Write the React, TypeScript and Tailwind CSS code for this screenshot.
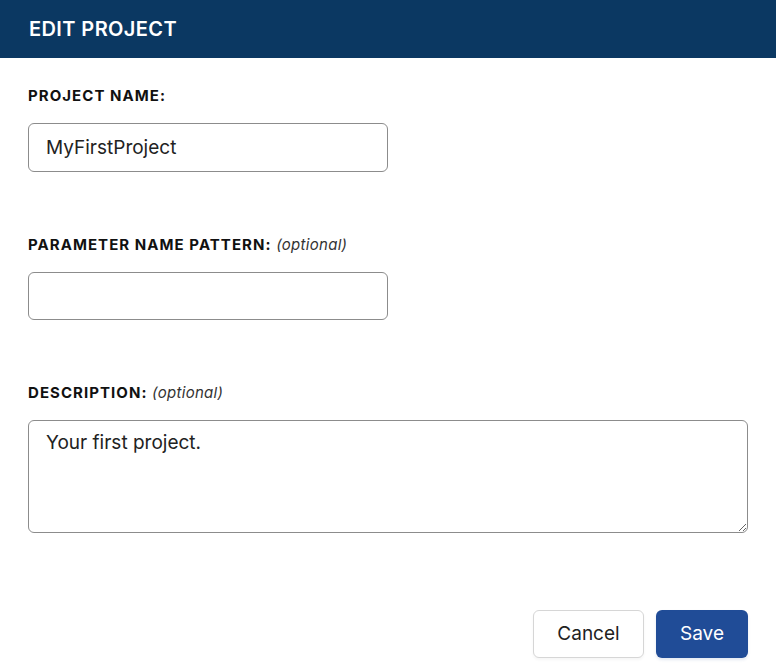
export default function App() {
  return (
    <div className="min-h-screen bg-white font-['Inter','Liberation_Sans',sans-serif] text-[#1a1a1a]">
      <div className="h-[58px] bg-[#0b3862] px-[29px] flex items-center">
        <h1 className="text-white text-[20px] font-semibold tracking-[0.02em]">EDIT PROJECT</h1>
      </div>

      <form className="px-[28px] pt-[28px]">
        <label className="block text-[15px] leading-5 font-bold tracking-[0.07em] text-[#111]">
          PROJECT NAME:
        </label>
        <input
          defaultValue="MyFirstProject"
          className="mt-[17px] block w-[360px] h-[49px] rounded-[6px] border border-[#8c8c8c] px-[17px] text-[19px] text-[#222] outline-none"
        />

        <label className="mt-[63px] block text-[15px] leading-5 font-bold tracking-[0.07em] text-[#111]">
          PARAMETER NAME PATTERN:{" "}
          <span className="font-normal italic tracking-[0.02em] text-[#333]">(optional)</span>
        </label>
        <input className="mt-[17px] block w-[360px] h-[48px] rounded-[6px] border border-[#8c8c8c] px-[17px] text-[19px] outline-none" />

        <label className="mt-[63px] block text-[15px] leading-5 font-bold tracking-[0.07em] text-[#111]">
          DESCRIPTION:{" "}
          <span className="font-normal italic tracking-[0.02em] text-[#333]">(optional)</span>
        </label>
        <textarea
          defaultValue="Your first project."
          className="mt-[17px] block w-[720px] h-[113px] rounded-[6px] border border-[#8c8c8c] px-[17px] py-[8px] text-[19px] text-[#222] outline-none"
        />

        <div className="mt-[77px] flex justify-end gap-[12px]">
          <button
            type="button"
            className="w-[111px] h-[48px] rounded-[6px] border border-[#d6d6d6] bg-white text-[19px] text-[#222] shadow-[0_2px_3px_rgba(0,0,0,0.04)]"
          >
            Cancel
          </button>
          <button
            type="button"
            className="w-[92px] h-[48px] rounded-[6px] bg-[#204c97] text-[19px] text-white shadow-[0_2px_3px_rgba(32,76,151,0.12)]"
          >
            Save
          </button>
        </div>
      </form>
    </div>
  );
}
